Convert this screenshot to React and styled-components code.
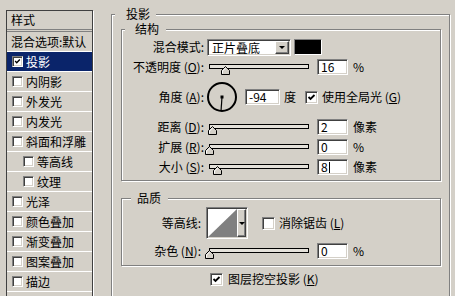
import React from "react";
import styled, { createGlobalStyle } from "styled-components";

const GlobalStyle = createGlobalStyle`
  html, body {
    margin: 0;
    padding: 0;
    background: #d4d0c8;
    overflow: hidden;
  }
  body {
    font-family: "Noto Sans CJK SC", "Liberation Sans", sans-serif;
    font-size: 12px;
    color: #000;
  }
`;

const Dialog = styled.div`
  display: flex;
  align-items: flex-start;
  width: 455px;
  height: 296px;
  overflow: hidden;
`;

/* left: list of effects */
const StyleList = styled.div`
  box-sizing: border-box;
  flex: none;
  width: 87px;
  height: 300px;
  margin: 10px 0 0 6px;
  border: 1px solid #404040;
  box-shadow: 1px 1px 0 #fff;
`;

const ListHeader = styled.div`
  height: 18px;
  line-height: 18px;
  padding-left: 4px;
  border-bottom: 3px double #808080;
`;

const ListItem = styled.div`
  display: flex;
  align-items: center;
  height: 19px;
  padding-left: ${(p) => p.$indent || 4}px;
  border-bottom: 1px solid #fff;
  background: ${(p) => (p.$active ? "#0a246a" : "transparent")};
  color: ${(p) => (p.$active ? "#fff" : "#000")};
  white-space: nowrap;
`;

const ItemText = styled.span`
  margin-left: 3px;
  line-height: 19px;
`;

const Check = styled.span`
  box-sizing: border-box;
  flex: none;
  display: inline-flex;
  align-items: center;
  justify-content: center;
  width: ${(p) => p.$size}px;
  height: ${(p) => p.$size}px;
  margin-left: ${(p) => p.$ml || 0}px;
  background: #fff;
  border: 1px solid;
  border-color: #808080 #fff #fff #808080;
  box-shadow: inset 1px 1px 0 #404040, inset -1px -1px 0 #d4d0c8;
`;

/* right: group boxes */
const GroupBox = styled.div`
  box-sizing: border-box;
  border: 1px solid #808080;
  box-shadow: inset 1px 1px 0 #fff, 1px 1px 0 #fff;
  margin-top: ${(p) => p.$mt || 0}px;
  padding: ${(p) => p.$pad || "0"};
`;

const OuterBox = styled(GroupBox)`
  flex: none;
  width: 339px;
  height: 300px;
  margin-left: 18px;
`;

const GroupTitle = styled.div`
  width: fit-content;
  height: 14px;
  line-height: 14px;
  margin: -8px 0 0 ${(p) => p.$ml}px;
  padding: 0 ${(p) => p.$pr}px 0 ${(p) => p.$pl}px;
  background: #d4d0c8;
  white-space: nowrap;
`;

const Row = styled.div`
  display: flex;
  align-items: center;
  height: ${(p) => p.$h || 20}px;
  margin-top: ${(p) => p.$mt || 0}px;
  padding-left: ${(p) => p.$pl || 0}px;
  white-space: nowrap;
`;

const Label = styled.span`
  flex: none;
  width: ${(p) => p.$w}px;
  text-align: right;
  line-height: 14px;
`;

const Text = styled.span`
  flex: none;
  margin-left: ${(p) => p.$ml || 0}px;
  line-height: 14px;
`;

const Sunken = styled.div`
  box-sizing: border-box;
  flex: none;
  border: 1px solid;
  border-color: #808080 #fff #fff #808080;
  box-shadow: inset 1px 1px 0 #404040, inset -1px -1px 0 #d4d0c8;
`;

const Select = styled(Sunken)`
  display: flex;
  width: 84px;
  height: 17px;
  margin-left: 3px;
  padding: 1px;
  background: #fff;
`;

const SelectText = styled.span`
  flex: 1;
  padding-left: 3px;
  line-height: 13px;
`;

const DropButton = styled.span`
  box-sizing: border-box;
  display: flex;
  align-items: ${(p) => (p.$top ? "flex-start" : "center")};
  justify-content: center;
  width: ${(p) => p.$w}px;
  height: 100%;
  padding-top: ${(p) => (p.$top ? 12 : 0)}px;
  background: #d4d0c8;
  border: 1px solid;
  border-color: #fff #404040 #404040 #fff;
  box-shadow: inset -1px -1px 0 #808080;

  &::after {
    content: "";
    border-left: 3px solid transparent;
    border-right: 3px solid transparent;
    border-top: 3px solid #000;
  }
`;

const Swatch = styled.div`
  box-sizing: border-box;
  width: 28px;
  height: 16px;
  margin-left: 3px;
  background: #000;
  border: 1px solid;
  border-color: #808080 #fff #fff #808080;
`;

const Field = styled(Sunken)`
  width: ${(p) => p.$w || 31}px;
  height: 16px;
  margin-left: ${(p) => p.$ml || 0}px;
  padding-left: 3px;
  background: #fff;
  line-height: 14px;
`;

const Caret = styled.span`
  display: inline-block;
  width: 1px;
  height: 11px;
  margin-left: 1px;
  vertical-align: -1px;
  background: #000;
`;

const SliderBox = styled.div`
  position: relative;
  flex: none;
  width: 110px;
  height: 20px;
  margin-left: ${(p) => p.$ml}px;
`;

const Track = styled.div`
  box-sizing: border-box;
  width: 100px;
  height: 5px;
  margin: 7px 0 0 2px;
  border: 1px solid #000;
  background: #e4e1da;
`;

const Thumb = styled.svg`
  position: absolute;
  top: 9px;
`;

const Contour = styled(Sunken)`
  display: flex;
  width: 42px;
  height: 32px;
  margin-left: 5px;
  padding: 1px;
  background: #fff;
`;

const Slider = ({ value, ml }) => (
  <SliderBox $ml={ml}>
    <Track />
    <Thumb width="9" height="9" viewBox="0 0 9 9" style={{ left: 2 + value - 4 }}>
      <polygon points="4.5,0.5 8.5,4.5 8.5,8.5 0.5,8.5 0.5,4.5" fill="#d4d0c8" stroke="#000" />
      <polyline points="1.5,7.5 1.5,5 4.5,2" fill="none" stroke="#fff" />
    </Thumb>
  </SliderBox>
);

const CheckBox = ({ size = 13, checked, ml }) => (
  <Check $size={size} $ml={ml}>
    {checked && (
      <svg width={size - 4} height={size - 4} viewBox="0 0 9 9">
        <polyline points="1.5,4 3.5,6 7.5,2" fill="none" stroke="#000" strokeWidth="1.8" />
      </svg>
    )}
  </Check>
);

const Dial = ({ angle }) => {
  const rad = (angle * Math.PI) / 180;
  return (
    <svg width="32" height="32" viewBox="0 0 32 32" style={{ marginLeft: 2, flex: "none" }}>
      <circle cx="16" cy="16" r="14" fill="none" stroke="#000" strokeWidth="2" />
      <rect x="14.5" y="14.5" width="3" height="3" fill="#000" />
      <line x1="16" y1="16" x2={16 + 14 * Math.cos(rad)} y2={16 - 14 * Math.sin(rad)} stroke="#000" strokeWidth="1.2" />
    </svg>
  );
};

const effects = [
  { name: "投影", checked: true, active: true },
  { name: "内阴影" },
  { name: "外发光" },
  { name: "内发光" },
  { name: "斜面和浮雕" },
  { name: "等高线", sub: true },
  { name: "纹理", sub: true },
  { name: "光泽" },
  { name: "颜色叠加" },
  { name: "渐变叠加" },
  { name: "图案叠加" },
  { name: "描边" },
];

const sliders = [
  { label: "距离", key: "D", value: 3, text: "2", unit: "像素" },
  { label: "扩展", key: "R", value: 0, text: "0", unit: "%" },
  { label: "大小", key: "S", value: 8, text: "8", unit: "像素", caret: true },
];

export default function App() {
  return (
    <>
      <GlobalStyle />
      <Dialog>
        <StyleList>
          <ListHeader>样式</ListHeader>
          <ListItem>混合选项:默认</ListItem>
          {effects.map((e) => (
            <ListItem key={e.name} $active={e.active} $indent={e.sub ? 16 : 5}>
              <CheckBox size={11} checked={e.checked} />
              <ItemText>{e.name}</ItemText>
            </ListItem>
          ))}
        </StyleList>

        <OuterBox $mt={14} $pad="0 8px 0 9px">
          <GroupTitle $ml={-6} $pl={11} $pr={6}>投影</GroupTitle>

          <GroupBox $mt={8} $pad="0 0 3px 0">
            <GroupTitle $ml={3} $pl={10} $pr={7}>结构</GroupTitle>
            <Row $mt={1}>
              <Label $w={82}>混合模式:</Label>
              <Select>
                <SelectText>正片叠底</SelectText>
                <DropButton $w={14} />
              </Select>
              <Swatch />
            </Row>
            <Row>
              <Label $w={82}>不透明度 (<u>O</u>):</Label>
              <Slider value={16} ml={3} />
              <Field>16</Field>
              <Text $ml={5}>%</Text>
            </Row>
            <Row $h={36} $mt={2}>
              <Label $w={82}>角度 (<u>A</u>):</Label>
              <Dial angle={-94} />
              <Field $w={35} $ml={7}>-94</Field>
              <Text $ml={4}>度</Text>
              <CheckBox checked ml={9} />
              <Text $ml={4}>使用全局光 (<u>G</u>)</Text>
            </Row>
            {sliders.map((s, i) => (
              <Row key={s.key} $mt={i === 0 ? 2 : 0}>
                <Label $w={82}>
                  {s.label} (<u>{s.key}</u>):
                </Label>
                <Slider value={s.value} ml={3} />
                <Field>
                  {s.text}
                  {s.caret && <Caret />}
                </Field>
                <Text $ml={5}>{s.unit}</Text>
              </Row>
            ))}
          </GroupBox>

          <GroupBox $mt={17} $pad="0 0 4px 0">
            <GroupTitle $ml={9} $pl={6} $pr={7}>品质</GroupTitle>
            <Row $h={32} $mt={2}>
              <Label $w={79}>等高线:</Label>
              <Contour>
                <svg width="29" height="28" viewBox="0 0 29 28" style={{ flex: "none" }}>
                  <polygon points="0,28 29,0 29,28" fill="#808080" />
                </svg>
                <DropButton $w={9} $top />
              </Contour>
              <CheckBox ml={14} />
              <Text $ml={4}>消除锯齿 (<u>L</u>)</Text>
            </Row>
            <Row $mt={2}>
              <Label $w={79}>杂色 (<u>N</u>):</Label>
              <Slider value={0} ml={6} />
              <Field>0</Field>
              <Text $ml={5}>%</Text>
            </Row>
          </GroupBox>

          <Row $h={14} $mt={6} $pl={89}>
            <CheckBox checked />
            <Text $ml={5}>图层挖空投影 (<u>K</u>)</Text>
          </Row>
        </OuterBox>
      </Dialog>
    </>
  );
}
